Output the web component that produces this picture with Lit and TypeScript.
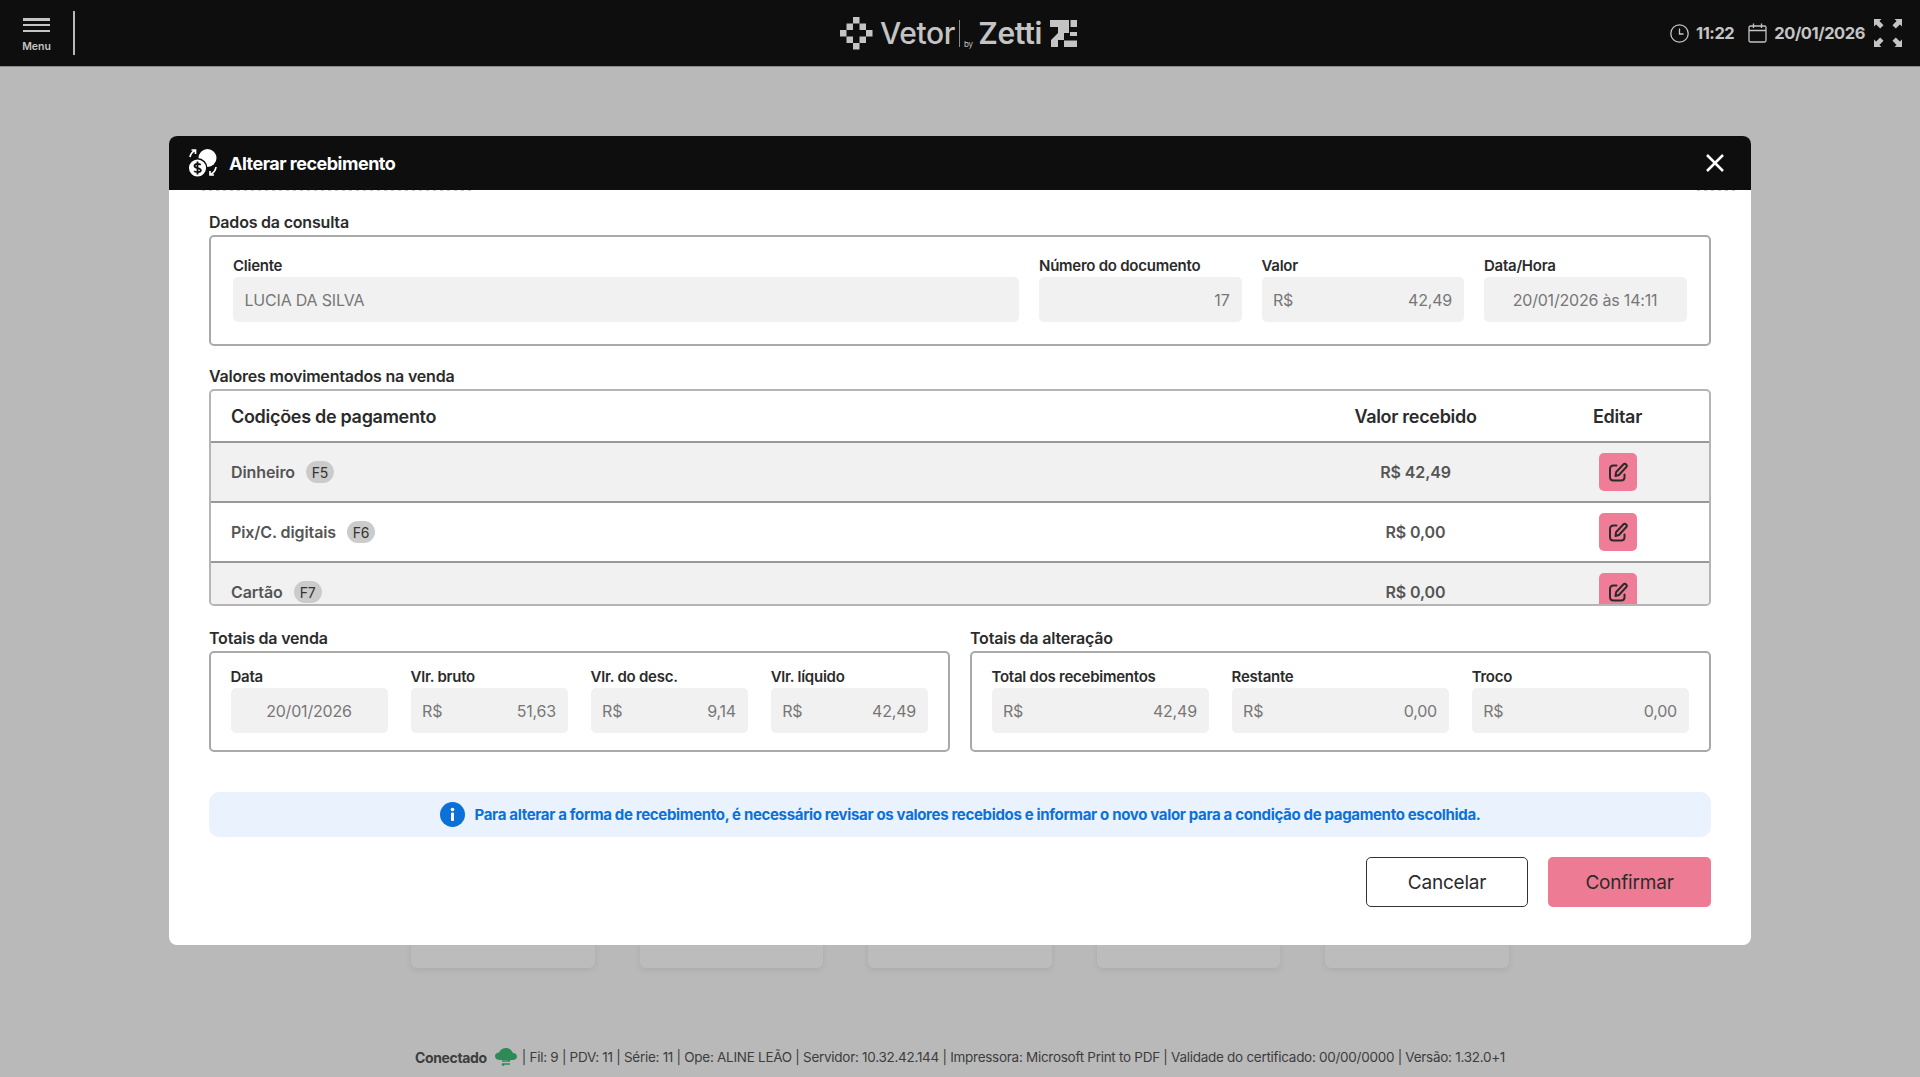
import { LitElement, html, css, svg } from "lit";
import { customElement } from "lit/decorators.js";

const pen = html`<svg width="22" height="22" viewBox="0 0 22 22" fill="none" stroke="#2b2b2b" stroke-width="2" stroke-linecap="round" stroke-linejoin="round"><path d="M9.500 4.500H6.500C4.500 4.500 3 6 3 8V16C3 18 4.500 19.500 6.500 19.500H14C16 19.500 17.500 18 17.500 16V13.500"/><path d="M8.500 15L9 11.300L16.300 3.500C17 2.700 18.300 2.600 19.100 3.400C19.900 4.200 19.900 5.400 19.100 6.200L11.900 14Z"/></svg>`;

const field = (label: string, cls: string, left: string, right: string) => html`
  <div class="field ${cls}">
    <span class="flabel">${label}</span>
    <div class="input">
      ${left ? html`<span>${left}</span>` : ""}<span>${right}</span>
    </div>
  </div>`;

const row = (name: string, key: string, value: string, alt: boolean) => html`
  <div class="row ${alt ? "alt" : ""}">
    <div class="cond"><span>${name}</span><span class="key">${key}</span></div>
    <div class="val">${value}</div>
    <div class="edit"><button class="pen" aria-label="Editar">${pen}</button></div>
  </div>`;

@customElement("app-root")
export class AppRoot extends LitElement {
  static styles = css`
    :host { display: block; width: 1920px; height: 1077px; position: relative; overflow: hidden; background: #b9b9b9; font-family: Inter, "Liberation Sans", sans-serif; color: #2b2b2b; }
    * { box-sizing: border-box; }
    .page { display: flex; flex-direction: column; height: 100%; }
    .top { height: 67px; flex: none; background: #0e0e0e; border-bottom: 1px solid #8c8c8c; display: grid; grid-template-columns: 1fr auto 1fr; align-items: center; color: #c4c4c4; }
    .top-left { display: flex; align-items: center; height: 100%; }
    .menu { width: 75px; height: 44px; border-right: 2px solid #b9b9b9; display: flex; flex-direction: column; align-items: center; }
    .burger { width: 27px; margin-top: 7px; height: 14px; flex: none; display: flex; flex-direction: column; justify-content: space-between; }
    .burger i { display: block; height: 2.500px; background: #c4c4c4; }
    .menu span { font-size: 10.500px; font-weight: 600; margin-top: 8px; line-height: 14px; }
    .logo { display: flex; align-items: center; height: 40px; margin-left: -3px; }
    .logo .v { font-size: 30px; font-weight: 500; letter-spacing: -0.4px; margin-left: 7px; }
    .logo .bar { width: 1px; height: 27px; background: #8a8a8a; margin-left: 4px; }
    .logo .by { font-size: 8px; align-self: flex-end; margin: 0 5px 4px 4px; }
    .logo .z { font-size: 30px; font-weight: 600; letter-spacing: -0.3px; margin-right: 8px; }
    .top-right { display: flex; align-items: center; justify-content: flex-end; padding-right: 18px; font-size: 16.500px; font-weight: 700; letter-spacing: -0.45px; }
    .top-right svg { display: block; }
    .clock { margin-right: 7px; }
    .cal { margin: 0 7px 0 14px; }
    .fs { margin-left: 9px; }

    .bg { flex: 1; display: flex; justify-content: center; gap: 45px; padding-top: 849px; height: 0; }
    .bgcard { width: 183.500px; height: 52px; flex: none; background: #bcbcbc; border-radius: 6px; box-shadow: 0 2px 6px rgba(0,0,0,.08); }
    .foot { position: absolute; left: 0; right: 0; bottom: 10px; display: flex; justify-content: center; align-items: center; font-size: 13.500px; letter-spacing: -0.28px; color: #3d3d3d; height: 20px; }
    .foot b { font-weight: 700; font-size: 14px; letter-spacing: -0.35px; margin-right: 8px; }
    .foot svg { margin-right: 5px; }

    .modal { position: absolute; left: 169px; top: 136px; width: 1582px; height: 809px; background: #fff; border-radius: 8px; overflow: hidden; display: flex; flex-direction: column; }
    .mhead { height: 54px; flex: none; background: #0e0e0e; color: #fff; display: flex; align-items: center; padding: 0 26px 0 19px; font-size: 18px; font-weight: 700; letter-spacing: -0.5px; }
    .mhead .title { flex: 1; margin-left: 11px; }
    .clip { position: absolute; top: 54px; height: 1px; background: repeating-linear-gradient(90deg, #c8c8c8 0 3px, transparent 3px 7px); }
    .clip.a { left: 33px; width: 273px; }
    .clip.b { left: 1528px; width: 40px; }
    .mbody { padding: 22px 40px 0; display: flex; flex-direction: column; flex: 1; }
    .slabel { font-size: 16px; font-weight: 600; line-height: 20px; letter-spacing: -0.2px; margin-bottom: 3px; height: 20px; }
    .box { border: 2px solid #a9a9a9; border-radius: 5px; }
    .consulta { height: 111px; padding: 20px 22px 0 22px; display: flex; gap: 20px; margin-bottom: 20px; }
    .field { display: flex; flex-direction: column; min-width: 0; }
    .flabel { font-size: 15px; font-weight: 600; line-height: 18px; letter-spacing: -0.25px; height: 18px; margin-bottom: 2px; white-space: nowrap; color: #2b2b2b; }
    .input { height: 45px; background: #f1f1f1; border-radius: 5px; display: flex; align-items: center; justify-content: space-between; padding: 0 12px 0 11.500px; font-size: 16px; letter-spacing: -0.2px; color: #777; white-space: nowrap; }
    .center .input { justify-content: center; }
    .end .input { justify-content: flex-end; }
    .w-cli { width: 786px; }
    .w-202 { width: 202.500px; }

    .table { height: 217px; overflow: hidden; margin-bottom: 22px; border-color: #b5b5b5; }
    .thead, .row { display: grid; grid-template-columns: 1fr 221px 183px; align-items: center; padding-left: 20px; }
    .thead { height: 52px; font-size: 18px; font-weight: 600; letter-spacing: -0.3px; border-bottom: 2px solid #999; }
    .thead div:nth-child(n+2) { text-align: center; }
    .row { height: 60px; flex: none; font-size: 16px; font-weight: 600; color: #555; border-bottom: 2px solid #999; letter-spacing: -0.1px; }
    .row.alt { background: #f1f1f1; }
    .cond { display: flex; align-items: center; gap: 11px; }
    .key { width: 28px; height: 22px; border-radius: 11px; background: #cbcbcb; font-size: 14px; font-weight: 400; color: #333; display: inline-flex; align-items: center; justify-content: center; }
    .val { text-align: center; }
    .edit { display: flex; justify-content: center; }
    .pen { width: 38px; height: 38px; padding: 0; border: 0; border-radius: 5px; background: #ef7d97; display: flex; align-items: center; justify-content: center; }

    .totals { display: grid; grid-template-columns: 741px 741px; gap: 20px; margin-bottom: 40px; }
    .tbox { height: 101px; padding: 15px 20px 0 19.500px; display: grid; gap: 22.700px; }
    .tbox.four { grid-template-columns: repeat(4, 1fr); }
    .tbox.three { grid-template-columns: repeat(3, 1fr); }

    .banner { height: 45px; flex: none; background: #eaf3fd; border-radius: 10px; display: flex; align-items: center; justify-content: center; color: #0b71d9; font-size: 15px; font-weight: 700; letter-spacing: -0.33px; margin-bottom: 20px; }
    .banner svg { margin-right: 10px; }
    .actions { display: flex; justify-content: flex-end; gap: 20px; }
    .btn { height: 50px; border-radius: 5px; font: 400 19px Inter, "Liberation Sans", sans-serif; color: #2b2b2b; letter-spacing: -0.2px; }
    .btn.sec { width: 162px; background: #fff; border: 1.500px solid #333; }
    .btn.pri { width: 163px; background: #ed7b93; border: 0; }
  `;

  render() {
    const sq = [[2,0],[1,1],[3,1],[0,2],[4,2],[1,3],[3,3],[2,4]];
    return html`
      <div class="page">
        <header class="top">
          <div class="top-left">
            <div class="menu">
              <div class="burger"><i></i><i></i><i></i></div>
              <span>Menu</span>
            </div>
          </div>
          <div class="logo">
            <svg width="33" height="33" viewBox="0 0 33 33" fill="#c4c4c4">${sq.map(([x, y]) => svg`<rect x="${x * 6.500}" y="${y * 6.500}" width="6.500" height="6.500"/>`)}</svg>
            <span class="v">Vetor</span><span class="bar"></span><span class="by">by</span><span class="z">Zetti</span>
            <svg width="27" height="27" viewBox="0 0 27 27" fill="#c4c4c4"><path d="M0 0H19V7H0Z"/><rect x="20.500" y="0" width="6.500" height="7"/><path d="M8 7H19V13H14V20H8V27H1V20L8 13Z"/><path d="M14 20.500H27V27H14Z"/><rect x="20" y="12" width="7" height="4"/></svg>
          </div>
          <div class="top-right">
            <svg class="clock" width="19" height="19" viewBox="0 0 19 19" fill="none" stroke="#c4c4c4" stroke-width="1.300"><circle cx="9.500" cy="9.500" r="8.700"/><path d="M9.500 4.500V10H13.500"/></svg>
            <span>11:22</span>
            <svg class="cal" width="19" height="20" viewBox="0 0 19 20" fill="none" stroke="#c4c4c4" stroke-width="1.300"><rect x="1" y="3" width="17" height="16" rx="1.500"/><path d="M1 7.500H18M5.500 .5V5M13.500 .5V5"/></svg>
            <span>20/01/2026</span>
            <svg class="fs" width="28" height="28" viewBox="0 0 28 28" fill="#c4c4c4"><path d="M0 0H7.500L5.400 2.100L9.500 6.200L6.200 9.500L2.100 5.400L0 7.500Z"/><path d="M28 0H20.500L22.600 2.100L18.500 6.200L21.800 9.500L25.900 5.400L28 7.500Z"/><path d="M0 28H7.500L5.400 25.900L9.500 21.800L6.200 18.500L2.100 22.600L0 20.500Z"/><path d="M28 28H20.500L22.600 25.900L18.500 21.800L21.800 18.500L25.900 22.600L28 20.500Z"/></svg>
          </div>
        </header>
        <div class="bg">
          ${[0, 1, 2, 3, 4].map(() => html`<div class="bgcard"></div>`)}
        </div>
        <footer class="foot">
          <b>Conectado</b>
          <svg width="22" height="18" viewBox="0 0 22 18"><path fill="#2e8b57" d="M5 12C2 12 0 10.500 0 8C0 6 2 4.500 4 4.500C5 2 8 0 11 0C14.500 0 17 2.500 18 5C20.500 5 22 6.500 22 8.500C22 10.500 20 12 18 12Z"/><path fill="none" stroke="#2e8b57" stroke-width="1.500" d="M7 13H15M13 11L15 13M15 16H7M9 18L7 16"/></svg>
          <span>| Fil: 9 | PDV: 11 | Série: 11 | Ope: ALINE LEÃO | Servidor: 10.32.42.144 | Impressora: Microsoft Print to PDF | Validade do certificado: 00/00/0000 | Versão: 1.32.0+1</span>
        </footer>
      </div>

      <section class="modal">
        <div class="mhead">
          <svg width="30" height="30" viewBox="0 0 30 30" fill="#fff"><circle cx="19.500" cy="10" r="9"/><circle cx="9.500" cy="20" r="9.300" stroke="#0e0e0e" stroke-width="1.500"/><path d="M9.500 13.500V26.500M12.700 16.800C11.500 15.500 6.500 15.300 6.500 18C6.500 20.800 12.800 19.300 12.800 22.200C12.800 24.800 7.500 24.500 6.200 23" fill="none" stroke="#0e0e0e" stroke-width="1.800"/><path d="M2 9C2.500 6 4 4 7 2.500M3.500 2H7.500V6M28 19C27.500 22.500 25.500 25 22.500 26.500M26 27H22V23" fill="none" stroke="#fff" stroke-width="1.700"/></svg>
          <span class="title">Alterar recebimento</span>
          <svg width="20" height="20" viewBox="0 0 20 20" stroke="#fff" stroke-width="2.500" fill="none"><path d="M2 2L18 18M18 2L2 18"/></svg>
        </div>
        <i class="clip a"></i><i class="clip b"></i>
        <div class="mbody">
          <div class="slabel">Dados da consulta</div>
          <div class="box consulta">
            ${field("Cliente", "w-cli", "LUCIA DA SILVA", "")}
            ${field("Número do documento", "w-202 end", "", "17")}
            ${field("Valor", "w-202", "R$", "42,49")}
            ${field("Data/Hora", "w-202 center", "", "20/01/2026 às 14:11")}
          </div>
          <div class="slabel">Valores movimentados na venda</div>
          <div class="box table">
            <div class="thead"><div>Codições de pagamento</div><div>Valor recebido</div><div>Editar</div></div>
            ${row("Dinheiro", "F5", "R$ 42,49", true)}
            ${row("Pix/C. digitais", "F6", "R$ 0,00", false)}
            ${row("Cartão", "F7", "R$ 0,00", true)}
          </div>
          <div class="totals">
            <div>
              <div class="slabel">Totais da venda</div>
              <div class="box tbox four">
                ${field("Data", "center", "", "20/01/2026")}
                ${field("Vlr. bruto", "", "R$", "51,63")}
                ${field("Vlr. do desc.", "", "R$", "9,14")}
                ${field("Vlr. líquido", "", "R$", "42,49")}
              </div>
            </div>
            <div>
              <div class="slabel">Totais da alteração</div>
              <div class="box tbox three">
                ${field("Total dos recebimentos", "", "R$", "42,49")}
                ${field("Restante", "", "R$", "0,00")}
                ${field("Troco", "", "R$", "0,00")}
              </div>
            </div>
          </div>
          <div class="banner">
            <svg width="25" height="25" viewBox="0 0 25 25"><circle cx="12.500" cy="12.500" r="12.500" fill="#0b71d9"/><rect x="11" y="10.500" width="3" height="8.500" rx="1" fill="#fff"/><circle cx="12.500" cy="7.500" r="1.800" fill="#fff"/></svg>
            <span>Para alterar a forma de recebimento, é necessário revisar os valores recebidos e informar o novo valor para a condição de pagamento escolhida.</span>
          </div>
          <div class="actions">
            <button class="btn sec">Cancelar</button>
            <button class="btn pri">Confirmar</button>
          </div>
        </div>
      </section>
    `;
  }
}
